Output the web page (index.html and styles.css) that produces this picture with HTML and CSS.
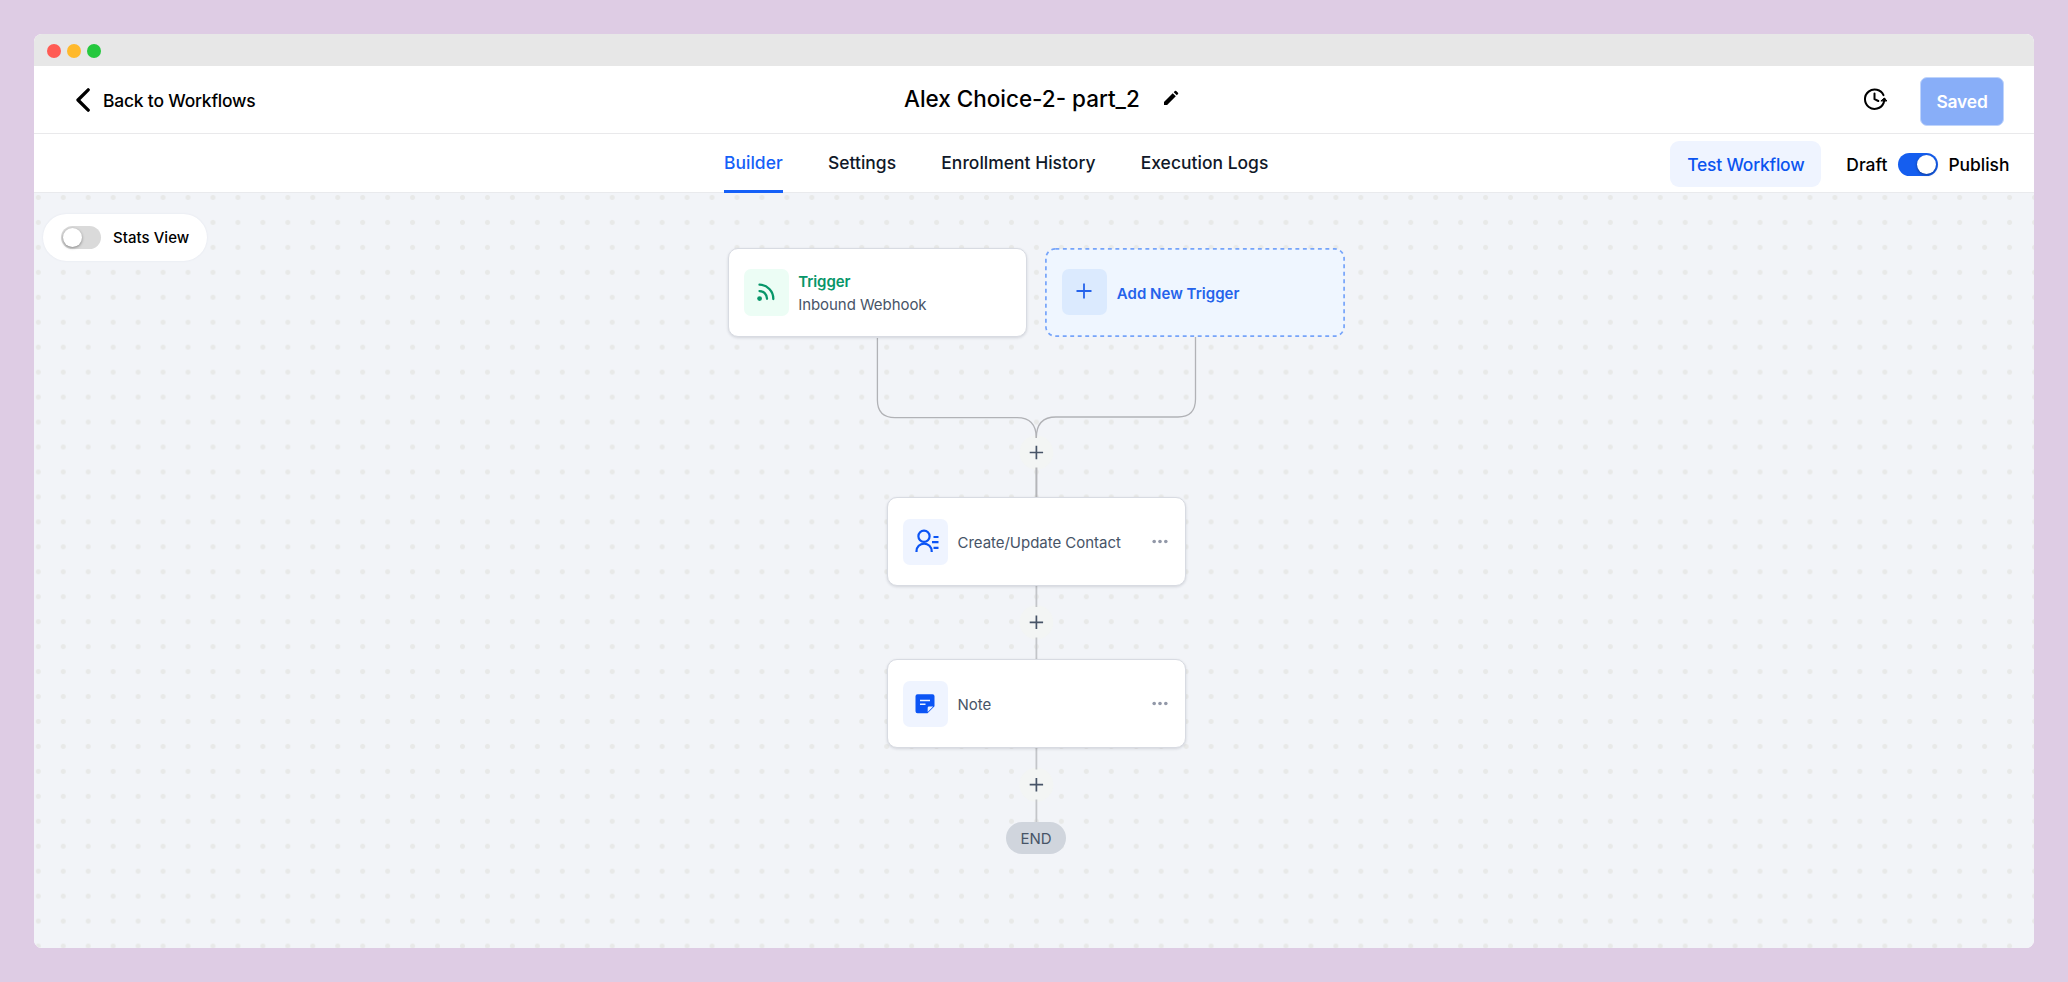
FILE: index.html
```html
<!DOCTYPE html>
<html lang="en">
<head>
<meta charset="utf-8">
<title>Workflow Builder</title>
<link rel="stylesheet" href="styles.css">
</head>
<body>
<div class="window">
  <div class="titlebar"><span class="light red"></span><span class="light yellow"></span><span class="light green"></span></div>
  <header class="header">
    <a class="back">
      <svg width="14" height="24" viewBox="0 0 14 24"><path d="M12.2 1.8 2 12l10.2 10.2" fill="none" stroke="#000" stroke-width="3.3" stroke-linecap="round" stroke-linejoin="round"/></svg>
      <span>Back to Workflows</span>
    </a>
    <div class="title">
      <h1>Alex Choice-2- part_2</h1>
      <svg width="16" height="16" viewBox="0 0 16 16"><path d="M1 15v-3.1L9.7 3.2l3.1 3.1L4.1 15zM10.7 2.2l1.2-1.2q.6-.6 1.3 0L15 2.8q.6.6 0 1.3l-1.2 1.2z" fill="#000"/></svg>
    </div>
    <div class="header-actions">
      <svg class="history" width="24" height="24" viewBox="0 0 24 24" fill="none" stroke="#000" stroke-width="2" stroke-linecap="round" stroke-linejoin="round"><path d="M20.5 8.2A9.7 9.7 0 1 0 20.6 16 M20.6 16Q21.4 14.300 21.400 12"/><path d="M11.500 6.500V12.200L15.300 14"/><path d="m18.200 13.700 3.200-2.700 2.200 2.700z" fill="#000" stroke-width="1"/></svg>
      <button class="saved">Saved</button>
    </div>
  </header>
  <nav class="nav">
    <div class="tabs">
      <a class="tab active">Builder</a>
      <a class="tab">Settings</a>
      <a class="tab">Enrollment History</a>
      <a class="tab">Execution Logs</a>
    </div>
    <div class="nav-actions">
      <button class="test">Test Workflow</button>
      <span class="draft">Draft</span>
      <span class="switch on"></span>
      <span class="publish">Publish</span>
    </div>
  </nav>
  <main class="canvas">
    <div class="stats"><span class="switch"></span><span>Stats View</span></div>

    <svg class="wires" width="2000" height="755" viewBox="34 193 2000 755" fill="none">
      <g fill="#f3f5f4"><circle cx="1036.400" cy="452.500" r="17"/><circle cx="1036.400" cy="622.300" r="17"/><circle cx="1036.400" cy="784.700" r="17"/></g>
      <g stroke="#b1b2b6" stroke-width="1.300">
        <path d="M877.400 338V400Q877.400 417.600 895 417.600H1017Q1036.300 417.600 1036.300 438"/>
        <path d="M1195.500 337V399Q1195.500 417 1178 417H1056Q1036.300 417 1036.300 438"/>
      </g>
      <path d="M1036.400 467.500V498" stroke="#b4b5b9" stroke-width="2"/>
      <path d="M1036.400 586V607M1036.400 637.500V660M1036.400 748V769.500M1036.400 799.500V822" stroke="#c3c5c9" stroke-width="1.800"/>
      <path d="M1029.700 452.500h13.400M1036.400 445.800v13.400M1029.700 622.300h13.400M1036.400 615.600v13.400M1029.700 784.700h13.400M1036.400 778v13.400" stroke="#475467" stroke-width="1.700"/>
    </svg>

    <article class="node trigger">
      <span class="icon green-icon"><svg width="20" height="20" viewBox="0 0 20 20" fill="none" stroke="#079669" stroke-width="2.300" stroke-linecap="round"><circle cx="3.600" cy="16.600" r="2.400" fill="#079669" stroke="none"/><path d="M3.500 9.100A7.500 7.500 0 0 1 11 16.800M3.500 2.700A14 14 0 0 1 17.300 17"/></svg></span>
      <span class="label"><b>Trigger</b>Inbound Webhook</span>
    </article>
    <article class="node add">
      <svg class="outline" width="300" height="90" viewBox="0 0 300 90"><rect x=".9" y=".9" width="298.200" height="87.200" rx="9.500" fill="#eff6ff" stroke="#76a4fa" stroke-width="1.700" stroke-dasharray="3.900 3.600"/></svg>
      <span class="icon"><svg width="16" height="16" viewBox="0 0 16 16"><path d="M.5 8h15M8 .5v15" stroke="#2563eb" stroke-width="1.800"/></svg></span>
      <b>Add New Trigger</b>
    </article>
    <article class="node contact">
      <span class="icon"><svg class="person" width="24" height="24" viewBox="0 0 24 24" fill="none" stroke="#0b54f5" stroke-width="2.200"><circle cx="9" cy="7.200" r="5.600"/><path d="M1.500 23v-.8a7.600 7.600 0 0 1 15.200 0v.8M18.500 8h5M17 13.200h6.500M18.500 18.800h5"/></svg></span>
      <span class="name">Create/Update Contact</span>
      <svg class="more" width="16" height="5" viewBox="0 0 16 5" fill="#9298a8"><circle cx="2.200" cy="2.500" r="1.800"/><circle cx="8" cy="2.500" r="1.800"/><circle cx="13.800" cy="2.500" r="1.800"/></svg>
    </article>
    <article class="node note">
      <span class="icon"><svg width="20" height="20" viewBox="0 0 20 20"><path d="M2.500.3h15q2 0 2 2v9.900l-7 7H2.500q-2 0-2-2V2.300q0-2 2-2z" fill="#0b54f5"/><path d="M5 6.400h10M5 10.300h5.500" stroke="#eff4ff" stroke-width="1.500"/><path d="M12.700 17.900v-4.200q0-1.300 1.300-1.300h4.200z" fill="#eff4ff"/></svg></span>
      <span class="name">Note</span>
      <svg class="more" width="16" height="5" viewBox="0 0 16 5" fill="#9298a8"><circle cx="2.200" cy="2.500" r="1.800"/><circle cx="8" cy="2.500" r="1.800"/><circle cx="13.800" cy="2.500" r="1.800"/></svg>
    </article>
    <div class="end">END</div>
  </main>
</div>
</body>
</html>
```

FILE: styles.css
```css
* { box-sizing: border-box; }
body {
  margin: 0;
  padding: 34px;
  height: 982px;
  background: #decce4;
  font-family: Inter, "Liberation Sans", sans-serif;
  font-size: 17.46px;
  font-weight: 500;
  color: #000;
}
svg { display: block; flex: none; }
button { font: inherit; border: 0; }
.window {
  display: flex;
  flex-direction: column;
  width: 2000px;
  height: 914px;
  border-radius: 8px;
  overflow: hidden;
  background: #fff;
}
.titlebar {
  display: flex;
  align-items: center;
  gap: 6px;
  height: 32px;
  padding: 2px 0 0 13px;
  background: #e7e7e7;
}
.light { width: 14px; height: 14px; border-radius: 50%; }
.red { background: #ff5b54; }
.yellow { background: #ffb92b; }
.green { background: #25c83e; }

.header {
  display: flex;
  align-items: center;
  height: 68px;
  border-bottom: 1px solid #e9e9eb;
}
.back {
  display: flex;
  align-items: center;
  gap: 13px;
  width: 870px;
  padding: 1px 0 0 42px;
  letter-spacing: -.19px;
}
.title { display: flex; align-items: center; gap: 23px; margin-top: -3px; }
.title h1 { margin: 0; font-size: 22.460px; font-weight: 500; }
.header-actions {
  display: flex;
  align-items: center;
  gap: 33px;
  margin-left: auto;
  padding-right: 30px;
}
.history { margin-top: -2px; }
.saved {
  width: 84px;
  height: 49px;
  margin-top: 3px;
  padding: 0;
  border: 1px solid #bfd4fb;
  border-radius: 7px;
  background: #88aef8;
  color: #fff;
  font-weight: 600;
  letter-spacing: -.2px;
}

.nav {
  display: flex;
  height: 59px;
  padding: 0 24.500px 0 690px;
  border-bottom: 1px solid #e9eaed;
}
.tabs { display: flex; gap: 45.200px; color: #101828; }
.tab { line-height: 57px; height: 59px; letter-spacing: .03px; }
.active { color: #1560f8; border-bottom: 3px solid #1560f8; }
.nav-actions { display: flex; align-items: center; margin-left: auto; padding-top: 2px; }
.test {
  width: 151px;
  height: 46px;
  padding: 0;
  margin-right: 25px;
  border-radius: 9px;
  background: #eff4ff;
  color: #0b54f0;
  letter-spacing: -.2px;
}
.draft { margin-right: 11px; }
.publish { margin-left: 10px; }
.switch {
  display: flex;
  width: 40px;
  height: 23px;
  padding: 2px;
  border-radius: 12px;
  background: #dadada;
}
.switch::before {
  content: "";
  width: 19px;
  height: 19px;
  border-radius: 50%;
  background: #fff;
  box-shadow: 0 1px 3px rgba(0, 0, 0, .4);
}
.switch.on { justify-content: flex-end; background: #155eef; }

.canvas {
  position: relative;
  flex: 1;
  background: #f2f4f8 radial-gradient(circle, #e8e9e8 2.100px, transparent 2.900px) -8.200px -8px / 24.954px 24.954px;
  font-size: 15px;
}
.wires { position: absolute; inset: 0; }
.stats {
  position: absolute;
  left: 9px;
  top: 20.500px;
  display: flex;
  align-items: center;
  gap: 12px;
  width: 163.500px;
  height: 47.500px;
  padding-left: 18px;
  border-radius: 24px;
  background: #fff;
  box-shadow: 0 0 2px #dfe3ec;
  letter-spacing: .04px;
}
.node {
  position: absolute;
  display: flex;
  align-items: center;
  width: 299px;
  height: 89px;
  padding: 0 17px 0 14.500px;
  border: 1.500px solid #d8dbe2;
  border-radius: 10px;
  background: #fff;
  box-shadow: 0 1px 3px rgba(16, 24, 40, .14);
  color: #475467;
  font-weight: 400;
}
.trigger { left: 693.700px; top: 55px; padding-left: 15px; }
.add { left: 1011.300px; top: 54.700px; width: 300px; border: 0; background: none; box-shadow: none; color: #2563eb; padding-left: 16.500px; }
.outline { position: absolute; inset: 0; }
.contact { left: 853px; top: 304.400px; height: 88.500px; }
.note { left: 853px; top: 466.400px; height: 88.500px; }
.icon {
  position: relative;
  display: flex;
  align-items: center;
  justify-content: center;
  width: 45px;
  height: 46px;
  margin-right: 10px;
  border-radius: 7px;
  background: #eff4ff;
}
.person { margin-left: 3px; margin-top: -1px; }
.add .icon { background: #dbeafe; }
.add .icon svg { margin-top: -2px; margin-left: -1px; }
.add b { position: relative; margin-top: 2px; font-weight: 600; letter-spacing: .03px; }
.name { margin-top: 2px; letter-spacing: -.03px; }
.green-icon { height: 47px; margin-right: 9.500px; background: #ecfdf5; }
.green-icon svg { margin-top: -2px; }
.label { display: flex; flex-direction: column; margin-top: 2px; line-height: 22.460px; letter-spacing: -.06px; }
.label b { font-weight: 600; color: #079669; }
.more { margin-left: auto; }
.end {
  position: absolute;
  left: 972.300px;
  top: 628.700px;
  width: 59.500px;
  height: 32.700px;
  border-radius: 17px;
  background: #d0d5dd;
  color: #475467;
  text-align: center;
  line-height: 33.500px;
  font-weight: 400;
}
```
